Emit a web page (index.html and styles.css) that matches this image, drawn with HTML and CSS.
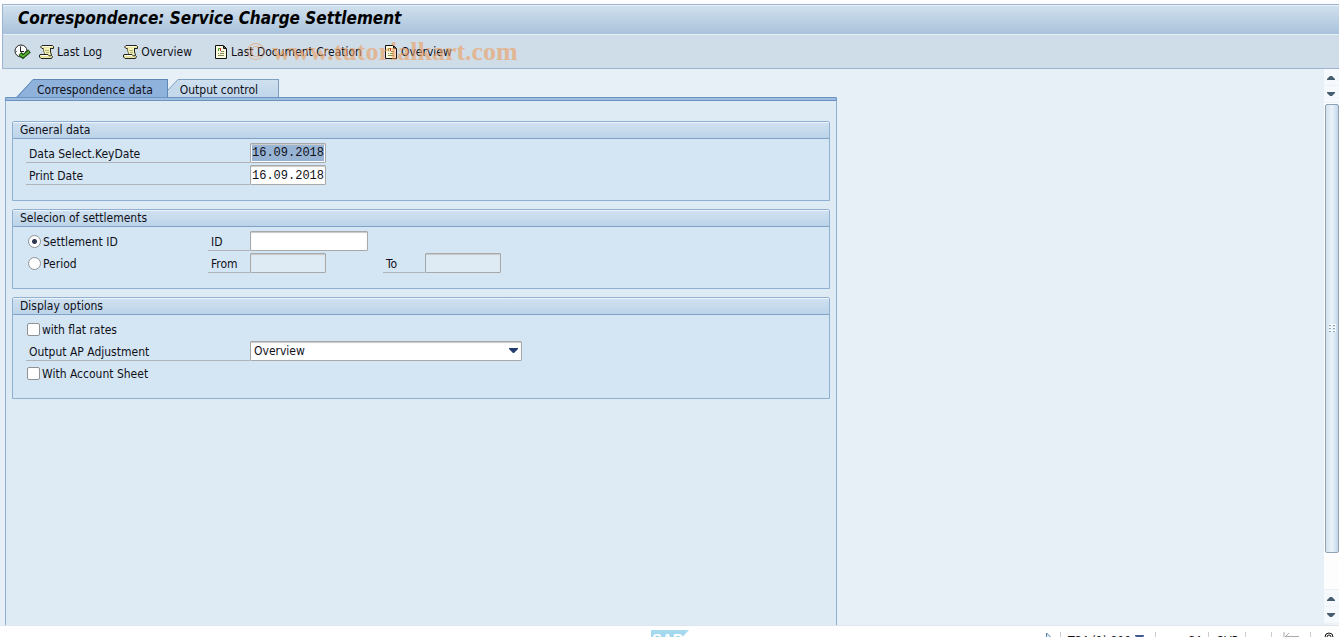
FILE: index.html
```
<!DOCTYPE html>
<html lang="en">
<head>
<meta charset="utf-8">
<title>Correspondence: Service Charge Settlement</title>
<link rel="stylesheet" href="styles.css">
</head>
<body>
<svg class="defs" aria-hidden="true">
  <symbol id="scroll" viewBox="0 0 16 16">
    <path d="M4 4H12V8L13 11H5V9L4 7Z" fill="#f3f0b4"/>
    <path d="M3 1.500H13.500L14.500 2.500V4.500H12M3 1.500L1.500 3L3 4.500H4" fill="#e9e6a2" stroke="#222"/>
    <path d="M3 2H13V4H3Z" fill="#e9e6a2"/>
    <path d="M3 2.500H12" stroke="#fffef0"/>
    <path d="M4.500 4V7L5.500 9V10" stroke="#77745a" fill="none"/>
    <path d="M11.500 4V8L12.500 11" stroke="#222" fill="none"/>
    <path d="M6 6.500H10M7 8.500H10" stroke="#b5b07a"/>
    <path d="M1 10.500H9L10.500 12L12.500 11.500L13.500 12.500L12.500 14.500H2L.5 13V11Z" fill="#e9e6a2" stroke="#222"/>
    <path d="M2 11.500H9" stroke="#fffef0"/>
  </symbol>
  <symbol id="doc" viewBox="0 0 12 14">
    <path d="M.5.5H8.500L11.500 3.500V13.500H.5Z" fill="#fdfce0" stroke="#111"/>
    <path d="M8.500 1V3.500H11Z" fill="#99a45c" stroke="#111"/>
    <path d="M3.500 6V3.500H5" fill="none" stroke="#4a9a20"/>
    <path d="M5.500 3V6" stroke="#c33a20"/>
    <path d="M6 6.500H9M3 8.500H4M5 8.500H9M3 10.500H9" stroke="#858a56"/>
  </symbol>
  <symbol id="up" viewBox="0 0 8 5"><path d="M0 5V4L3 1H5L8 4V5Z" fill="#465d70"/></symbol>
  <symbol id="down" viewBox="0 0 8 5"><path d="M0 0V1L3 4H5L8 1V0Z" fill="#465d70"/></symbol>
</svg>
<div class="window">
  <header class="head">
    <h1 class="title">Correspondence: Service Charge Settlement</h1>
    <div class="toolbar">
      <button class="tool" aria-label="Execute">
        <svg width="17" height="16" viewBox="0 0 17 16"><circle cx="7" cy="7" r="6" fill="#fff" stroke="#222"/><path d="M6.500 3V8M6 7.500H10" stroke="#222" fill="none"/><path d="M6 2.500H7M2 7.500H3M11 7.500H12" stroke="#777"/><path d="M6 9.500L9 12.500L15.500 7" stroke="#173c0d" stroke-width="4" fill="none"/><path d="M6 10L9 12.500L15 7.500" stroke="#56b52c" stroke-width="2" fill="none"/></svg>
      </button>
      <button class="tool log"><svg width="16" height="16"><use href="#scroll"/></svg>Last Log</button>
      <button class="tool over"><svg width="16" height="16"><use href="#scroll"/></svg>Overview</button>
      <button class="tool creation"><svg width="12" height="14"><use href="#doc"/></svg>Last Document Creation</button>
      <button class="tool last"><svg width="12" height="14"><use href="#doc"/></svg>Overview</button>
      <div class="watermark"><span class="copy">©</span> www.tutorialkart.com</div>
    </div>
  </header>
  <main class="main">
    <form class="content">
      <div class="tabs" role="tablist">
        <button type="button" role="tab" aria-selected="true" class="tab active"><svg width="20" height="19"><path d="M0 19L18 .5H20V19Z" fill="#8fb2dc"/><path d="M0 18.500H2L18 .5H20" fill="none" stroke="#5d87b5"/></svg><span class="tabtext">Correspondence data</span></button>
        <button type="button" role="tab" aria-selected="false" class="tab"><svg width="12" height="19"><path d="M0 19V11L10 .5H12V19Z" fill="#c4d9ec"/><path d="M0 11L10 .5H12" fill="none" stroke="#7d9fc1"/></svg><span class="tabtext">Output control</span></button>
      </div>
      <div class="panel">
        <section class="group">
          <h2 class="grouphead">General data</h2>
          <div class="rows">
            <div class="row"><label class="label wide" for="key">Data Select.KeyDate</label><input class="field selected" id="key" value="16.09.2018"></div>
            <div class="row"><label class="label wide" for="print">Print Date</label><input class="field" id="print" value="16.09.2018"></div>
          </div>
        </section>
        <section class="group">
          <h2 class="grouphead">Selecion of settlements</h2>
          <div class="rows">
            <div class="row"><label class="choice option"><input type="radio" name="by" class="radio" checked>Settlement ID</label><label class="label short" for="id">ID</label><input class="field long" id="id"></div>
            <div class="row"><label class="choice option"><input type="radio" name="by" class="radio">Period</label><label class="label short" for="from">From</label><input class="field" id="from" disabled><label class="label short to" for="to">To</label><input class="field" id="to" disabled></div>
          </div>
        </section>
        <section class="group">
          <h2 class="grouphead">Display options</h2>
          <div class="rows">
            <div class="row"><label class="choice"><input type="checkbox" class="check">with flat rates</label></div>
            <div class="row"><label class="label wide" for="out">Output AP Adjustment</label><div class="combo"><select class="select" id="out"><option>Overview</option></select><svg class="caret" width="9" height="5"><path d="M0 0H9V1L5 5H4L0 1Z" fill="#233d70"/></svg></div></div>
            <div class="row"><label class="choice"><input type="checkbox" class="check">With Account Sheet</label></div>
          </div>
        </section>
      </div>
    </form>
    <div class="scroll">
      <button class="step" aria-label="Scroll up"><svg width="8" height="5"><use href="#up"/></svg></button>
      <button class="step" aria-label="Scroll down"><svg width="8" height="5"><use href="#down"/></svg></button>
      <div class="track"><div class="thumb"><svg width="7" height="9"><path d="M0 1H3M4 1H7M0 4H3M4 4H7M0 7H3M4 7H7" stroke="#fff" stroke-width="2"/><path d="M0 1.500H2M4 1.500H6M0 4.500H2M4 4.500H6M0 7.500H2M4 7.500H6" stroke="#8ba5bb"/></svg></div></div>
      <button class="step" aria-label="Page up"><svg width="8" height="5"><use href="#up"/></svg></button>
      <button class="step" aria-label="Page down"><svg width="8" height="5"><use href="#down"/></svg></button>
    </div>
  </main>
  <footer class="status">
    <div class="logo"><svg width="38" height="20"><defs><linearGradient id="sky" x2="0" y2="1"><stop stop-color="#a9dbf0"/><stop offset="1" stop-color="#8dcbea"/></linearGradient></defs><path d="M0 0H38L19 20H0Z" fill="url(#sky)"/></svg><span class="brand">SAP</span></div>
    <div class="info">
      <svg class="play" width="9" height="14"><path d="M1.500 1V12L7.500 7Z" fill="#e4f0fa" stroke="#5684ae"/></svg>
      <span class="cell system">TS4 (1) 800 <svg width="9" height="6"><path d="M0 .5H9M1 2.500H8" stroke="#435a92" stroke-width="2"/></svg></span>
      <span class="cell server">S4</span>
      <span class="cell mode">OVR</span>
      <span class="cell gap"></span>
      <span class="cell back"><svg width="16" height="10"><path d="M1 0V9M2 4.500H16M6 1L2.500 4.500L6 8" stroke="#aaa" fill="none"/></svg></span>
      <span class="cell lock"><svg width="10" height="14"><circle cx="5" cy="5" r="4" fill="#fff" stroke="#111"/><circle cx="5" cy="5" r="2" fill="none" stroke="#111"/><path d="M1 8H9V14H1Z"/></svg></span>
    </div>
  </footer>
</div>
</body>
</html>
```
FILE: styles.css
```
*, *::before { box-sizing: border-box; }
body { margin: 0; overflow: hidden; font: 12px/16px "DejaVu Sans Condensed", "DejaVu Sans", sans-serif; font-stretch: condensed; color: #101018; background: #fff; }
button, select { font: inherit; font-stretch: inherit; color: inherit; border: 0; background: none; padding: 0; margin: 0; }
h1, h2 { margin: 0; }
svg { display: block; flex: none; }
.defs { position: absolute; width: 0; height: 0; }
.window { height: 100vh; display: flex; flex-direction: column; background: #fdfdff; }
.head { margin: 4px 0 0 2px; border: 1px solid #9db3cf; border-right: 0; background: #cfdde9; }
.title { height: 30px; padding: 0 15px; font-size: 17px; line-height: 24px; font-style: italic; font-weight: bold; color: #000; background: linear-gradient(#d0e0ed, #a9c2db); border-bottom: 1px solid #e9f1f8; border-top: 1px solid #e5f0f7; }
.toolbar { position: relative; height: 33px; display: flex; align-items: center; padding-left: 11px; }
.tool { display: flex; align-items: center; gap: 2px; height: 24px; white-space: nowrap; }
.log { margin-left: 8px; }
.over { margin-left: 21px; }
.creation, .last { gap: 4px; margin-left: 23px; }
.watermark { position: absolute; left: 243px; top: 0; font: bold 26px/34px "Liberation Serif", serif; color: #ee9d5d; opacity: .6; pointer-events: none; white-space: nowrap; }
.copy { font-weight: normal; }
.main { flex: 1; min-height: 0; display: flex; background: #e7eff7; border-bottom: 1px solid #dfe6ee; }
.content { flex: 1; display: flex; flex-direction: column; padding: 10px 0 0 5px; }
.tabs { display: flex; height: 18px; padding-left: 10px; }
.tab { display: flex; height: 19px; }
.tabtext { height: 19px; line-height: 20px; border-top: 1px solid #7d9fc1; border-right: 1px solid #7d9fc1; padding: 0 20px 0 0; background: linear-gradient(#cfe0ef, #bfd5ea); }
.active .tabtext { padding: 0 14px 0 2px; border-color: #5d87b5; background: #8fb2dc; }
.panel { position: relative; flex: 1; width: 100%; max-width: 832px; padding: 24px 6px 0; display: flex; flex-direction: column; gap: 8px; border: 1px solid #8fb0d0; border-top: 0; border-bottom: 0; background: #deebf5; }
.panel::before { content: ""; position: absolute; inset: 0 -1px auto; height: 4px; border: 1px solid #6b93bd; background: #9ebde2; border-radius: 2px 2px 0 0; }
.group { border: 1px solid #8fb0d0; border-radius: 2px 2px 0 0; background: #d4e6f4; }
.grouphead { height: 17px; padding-left: 7px; font-size: 12px; line-height: 15px; font-weight: normal; background: linear-gradient(#cfe0ef, #bcd4e9); border-bottom: 1px solid #7fa2c6; border-top: 1px solid #eaf4fa; }
.rows { display: flex; flex-direction: column; gap: 2px; padding: 4px 13px 15px; }
.row { display: flex; height: 20px; }
.label { height: 20px; padding: 2px 0 0 3px; line-height: 18px; border-bottom: 1px solid #b0b4b8; }
.wide { width: 224px; }
.short { width: 42px; }
.to { margin-left: 57px; }
.field { width: 76px; height: 20px; padding: 1px 1px 0; border: 1px solid #a6a8aa; border-radius: 1px; background: #fff; font: 12px/18px "Liberation Mono", monospace; color: #101018; box-shadow: inset 0 1px 1px #c8c8c8; }
.long { width: 118px; }
.selected { background: linear-gradient(#98b4d5, #98b4d5) content-box, #fff; padding: 1px; }
.field:disabled { background: #deebf5; }
.choice { display: flex; align-items: center; gap: 2px; line-height: 18px; padding-top: 1px; white-space: nowrap; }
.option { width: 182px; padding-left: 2px; }
.radio, .check { appearance: none; flex: none; width: 13px; height: 13px; margin: 0; border: 1px solid #8e9296; background: #fff; }
.radio { border-radius: 50%; }
.check { margin-left: 1px; border-radius: 2px; }
.radio:checked { background: radial-gradient(circle, #303850 0 2px, #fff 3px); }
.combo { position: relative; width: 272px; }
.select { appearance: none; width: 100%; height: 20px; padding: 0 3px; border: 1px solid #a6a8aa; border-radius: 1px; background: #fff; box-shadow: inset 0 1px 1px #c8c8c8; }
.caret { position: absolute; right: 4px; top: 7px; pointer-events: none; }
.scroll { width: 15px; display: flex; flex-direction: column; gap: 1px; padding: 0 0 2px; background: #eef2f7; }
.step { height: 16px; padding-right: 1px; display: flex; align-items: center; justify-content: center; background: #f5f8fc; }
.track { flex: 1; background: #fdfdfe; padding: 1px 0 36px; }
.thumb { height: 100%; margin-left: 1px; display: flex; align-items: center; justify-content: center; border: 1px solid #8fa3b4; border-radius: 2px; background: linear-gradient(90deg, #d3e1ec, #eaf3fa 50%, #c2d7ea); }
.status { flex: none; height: 11px; overflow: hidden; display: flex; justify-content: space-between; padding: 0 5px 0 651px; background: #fff; }
.logo { position: relative; margin-top: 4px; }
.brand { position: absolute; left: 1px; top: 0; font: bold 15px/18px "Liberation Sans", sans-serif; color: #fff; }
.info { display: flex; align-items: flex-start; height: 24px; padding-top: 6px; line-height: 18px; }
.play { margin-right: 6px; }
.cell { display: flex; gap: 4px; height: 16px; padding-left: 7px; border-left: 1px solid #ccc; white-space: nowrap; }
.cell svg { margin-top: 3px; }
.system { width: 95px; }
.server { width: 53px; padding-left: 32px; }
.mode { width: 37px; }
.gap { width: 26px; }
.back { width: 39px; padding-left: 11px; }
.back svg, .lock svg { margin-top: 0; }
.lock { padding-left: 13px; }
```
